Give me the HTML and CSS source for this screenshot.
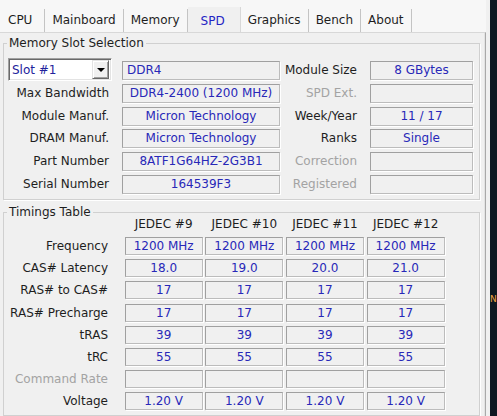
FILE: index.html
```html
<!DOCTYPE html>
<html lang="en">
<head>
    <meta charset="UTF-8">
    <meta name="viewport" content="width=device-width, initial-scale=1.0">
    <title>CPU-Z</title>
    <link rel="stylesheet" href="styles.css">
</head>
<body>
    <div class="window">
        <!-- Tab strip -->
        <div class="tabs">
            <div class="tab tab-cpu">CPU</div>
            <div class="tab">Mainboard</div>
            <div class="tab">Memory</div>
            <div class="tab active">SPD</div>
            <div class="tab">Graphics</div>
            <div class="tab">Bench</div>
            <div class="tab">About</div>
        </div>

        <div class="panel">
            <!-- Slot info -->
            <fieldset class="group">
                <legend>Memory Slot Selection</legend>
                <div class="slot-grid">
                    <div class="slot-select">
                        <span class="slot-value">Slot #1</span>
                        <span class="drop-btn"><span class="arrow"></span></span>
                    </div>
                    <div class="field left">DDR4</div>
                    <div class="label">Module Size</div>
                    <div class="field">8 GBytes</div>

                    <div class="label">Max Bandwidth</div>
                    <div class="field">DDR4-2400 (1200 MHz)</div>
                    <div class="label off">SPD Ext.</div>
                    <div class="field"></div>

                    <div class="label">Module Manuf.</div>
                    <div class="field">Micron Technology</div>
                    <div class="label">Week/Year</div>
                    <div class="field">11 / 17</div>

                    <div class="label">DRAM Manuf.</div>
                    <div class="field">Micron Technology</div>
                    <div class="label">Ranks</div>
                    <div class="field">Single</div>

                    <div class="label">Part Number</div>
                    <div class="field">8ATF1G64HZ-2G3B1</div>
                    <div class="label off">Correction</div>
                    <div class="field"></div>

                    <div class="label">Serial Number</div>
                    <div class="field">164539F3</div>
                    <div class="label off">Registered</div>
                    <div class="field"></div>
                </div>
            </fieldset>

            <!-- JEDEC timings -->
            <fieldset class="group timings">
                <legend>Timings Table</legend>
                <div class="timing-grid">
                    <div></div>
                    <div class="col-head">JEDEC #9</div>
                    <div class="col-head">JEDEC #10</div>
                    <div class="col-head">JEDEC #11</div>
                    <div class="col-head">JEDEC #12</div>

                    <div class="label">Frequency</div>
                    <div class="field">1200 MHz</div>
                    <div class="field">1200 MHz</div>
                    <div class="field">1200 MHz</div>
                    <div class="field">1200 MHz</div>

                    <div class="label">CAS# Latency</div>
                    <div class="field">18.0</div>
                    <div class="field">19.0</div>
                    <div class="field">20.0</div>
                    <div class="field">21.0</div>

                    <div class="label">RAS# to CAS#</div>
                    <div class="field">17</div>
                    <div class="field">17</div>
                    <div class="field">17</div>
                    <div class="field">17</div>

                    <div class="label">RAS# Precharge</div>
                    <div class="field">17</div>
                    <div class="field">17</div>
                    <div class="field">17</div>
                    <div class="field">17</div>

                    <div class="label">tRAS</div>
                    <div class="field">39</div>
                    <div class="field">39</div>
                    <div class="field">39</div>
                    <div class="field">39</div>

                    <div class="label">tRC</div>
                    <div class="field">55</div>
                    <div class="field">55</div>
                    <div class="field">55</div>
                    <div class="field">55</div>

                    <div class="label off">Command Rate</div>
                    <div class="field"></div>
                    <div class="field"></div>
                    <div class="field"></div>
                    <div class="field"></div>

                    <div class="label">Voltage</div>
                    <div class="field">1.20 V</div>
                    <div class="field">1.20 V</div>
                    <div class="field">1.20 V</div>
                    <div class="field">1.20 V</div>
                </div>
            </fieldset>
        </div>
    </div>

    <!-- Desktop behind the window -->
    <div class="desktop">
        <span class="desk-letter">N</span>
    </div>
</body>
</html>
```

FILE: styles.css
```css
* {
    margin: 0;
    padding: 0;
    box-sizing: border-box;
}

body {
    font-family: "DejaVu Sans", Verdana, sans-serif;
    font-size: 12px;
    color: #1e1e1e;
    background: #f0f0f0;
    height: 416px;
    overflow: hidden;
    display: flex;
}

/* Window */
.window {
    width: 490px;
    padding-right: 4px;
    background: #f0f0f0;
    display: flex;
    flex-direction: column;
}

/* Tabs */
.tabs {
    flex-shrink: 0;
    display: flex;
    align-items: flex-end;
    height: 32px;
    padding-left: 2px;
    background: #f7f7f7;
}

.tab {
    height: 23px;
    line-height: 22px;
    padding: 0 7px;
    border-right: 1px solid #c4c4c4;
    text-align: center;
    white-space: nowrap;
}

.tab-cpu {
    padding: 0 12px 0 6px;
}

.tab.active {
    height: 26px;
    line-height: 28px;
    padding: 0 15px 0 13px;
    margin-bottom: -1px;
    background: #f0f0f0;
    color: #2424c4;
    border-right-color: #d8d8d8;
}

/* Panel under the tabs */
.panel {
    flex: 1;
    min-height: 0;
    border-top: 1px solid #d8d8d8;
    border-right: 1px solid #a9a9a9;
    box-shadow: inset -1px 0 0 #e3e3e3;
    padding: 3px 5px 0 3px;
    display: flex;
    flex-direction: column;
    gap: 5px;
}

/* Group boxes */
.group {
    flex-shrink: 0;
    border: 1px solid #d0d0d0;
    box-shadow: 1px 1px 0 #fff;
    padding: 10px 5px 5px 4px;
}

.group legend {
    padding: 0 2px;
    margin-left: -1px;
    line-height: 15px;
}

.slot-grid {
    display: grid;
    grid-template-columns: 114px 158px 90px 103px;
    grid-auto-rows: 19px;
    row-gap: 3.8px;
}

.label {
    text-align: right;
    padding-right: 13px;
    line-height: 19px;
    white-space: nowrap;
}

.label.off {
    color: #a3a3a3;
}

.field {
    border: 1px solid #bcbcbc;
    border-top-color: #a0a0a0;
    border-left-color: #a0a0a0;
    box-shadow: 1px 1px 0 #fff;
    color: #2828b8;
    text-align: center;
    line-height: 17px;
    white-space: nowrap;
    overflow: hidden;
}

.field.left {
    text-align: left;
    padding-left: 4px;
}

/* Slot combo box */
.slot-select {
    width: 104px;
    height: 23px;
    margin-top: -3px;
    display: flex;
    align-items: center;
    justify-content: space-between;
    background: #fff;
    border: 1px solid;
    border-color: #a0a0a0 #fff #fff #a0a0a0;
    box-shadow: inset 1px 1px 0 #696969, inset -1px -1px 0 #e3e3e3;
    padding: 1px 2px 1px 3px;
}

.slot-value {
    color: #22229c;
}

.drop-btn {
    width: 17px;
    height: 19px;
    background: #f0f0f0;
    border: 1px solid;
    border-color: #e3e3e3 #696969 #696969 #e3e3e3;
    box-shadow: inset 1px 1px 0 #fff, inset -1px -1px 0 #a0a0a0;
    display: flex;
    align-items: center;
    justify-content: center;
}

.arrow {
    border-left: 4px solid transparent;
    border-right: 4px solid transparent;
    border-top: 4px solid #000;
}

/* Timings */
.timings {
    flex: 1 0 auto;
    padding-top: 0;
}

.timing-grid {
    display: grid;
    grid-template-columns: 114px repeat(4, 78px);
    grid-template-rows: 13px;
    grid-auto-rows: 18px;
    column-gap: 2.67px;
    row-gap: 4.15px;
}

.timing-grid .label {
    padding-right: 14px;
    line-height: 18px;
}

.timing-grid .field {
    line-height: 16px;
}

.col-head {
    text-align: center;
    line-height: 13px;
    margin-top: -2px;
    white-space: nowrap;
}

/* Dark desktop strip */
.desktop {
    flex: 1;
    background: #0e1821;
    padding-top: 293px;
    overflow: hidden;
}

.desk-letter {
    display: block;
    color: #f0a040;
    font-size: 9px;
    line-height: 12px;
}
```
